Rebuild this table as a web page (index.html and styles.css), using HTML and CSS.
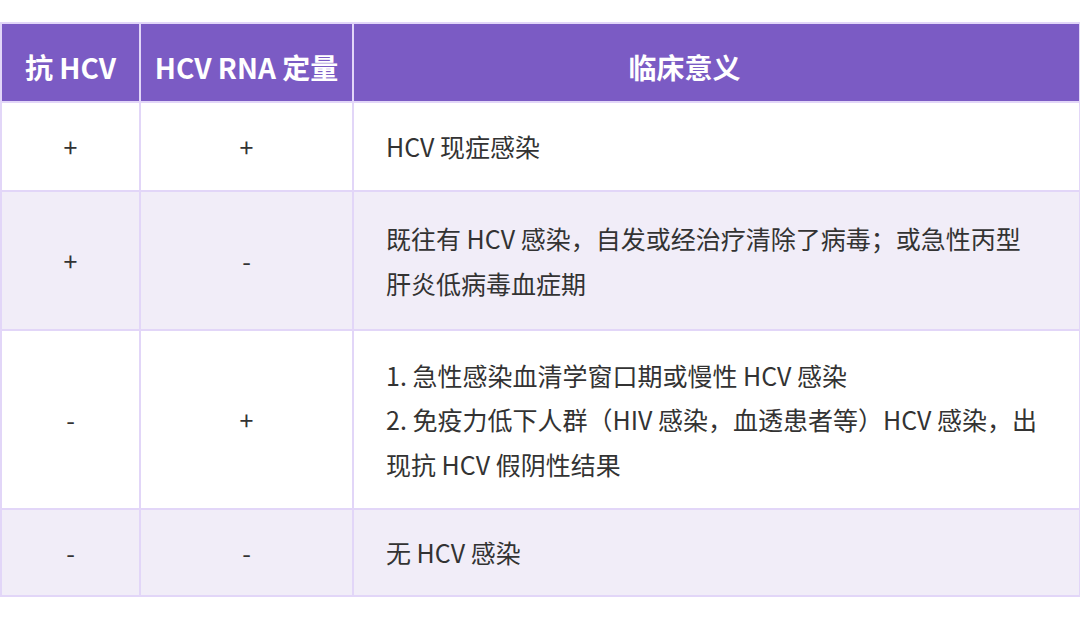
FILE: index.html
```html
<!DOCTYPE html>
<html lang="zh">
<head>
<meta charset="utf-8">
<link rel="stylesheet" href="styles.css">
</head>
<body>
<table class="tbl">
  <colgroup>
    <col class="c1">
    <col class="c2">
    <col class="c3">
  </colgroup>
  <thead>
    <tr class="head">
      <th>抗 HCV</th>
      <th>HCV RNA 定量</th>
      <th class="meaning">临床意义</th>
    </tr>
  </thead>
  <tbody>
    <tr class="r1">
      <td class="sign">+</td>
      <td class="sign">+</td>
      <td class="desc">HCV 现症感染</td>
    </tr>
    <tr class="r2 alt">
      <td class="sign">+</td>
      <td class="sign">-</td>
      <td class="desc">既往有 HCV 感染，自发或经治疗清除了病毒；或急性丙型<br>肝炎低病毒血症期</td>
    </tr>
    <tr class="r3">
      <td class="sign">-</td>
      <td class="sign">+</td>
      <td class="desc">1. 急性感染血清学窗口期或慢性 HCV 感染<br>2. 免疫力低下人群（HIV 感染，血透患者等）HCV 感染，出<br>现抗 HCV 假阴性结果</td>
    </tr>
    <tr class="r4 alt">
      <td class="sign">-</td>
      <td class="sign">-</td>
      <td class="desc">无 HCV 感染</td>
    </tr>
  </tbody>
</table>
</body>
</html>
```

FILE: styles.css
```css
html, body {
  margin: 0;
  padding: 0;
  background: #ffffff;
}
body {
  font-family: "Noto Sans CJK SC", "Noto Sans", sans-serif;
  color: #333333;
}
.tbl {
  margin-top: 22px;
  border-collapse: collapse;
  width: 1079px;
  table-layout: fixed;
}
.c1 { width: 139px; }
.c2 { width: 213px; }
.c3 { width: 727px; }
.tbl th, .tbl td {
  border: 2px solid #e2d6f8;
  padding: 0;
}
.head th {
  background: #7b5bc4;
  color: #ffffff;
  font-weight: 700;
  font-size: 28px;
  height: 69px;
  padding-top: 8px;
  text-align: center;
}
.head th.meaning {
  padding-right: 64px;
}
.tbl td {
  font-size: 25px;
  line-height: 44.5px;
}
.sign {
  text-align: center;
}
.desc {
  text-align: left;
  padding-left: 32px !important;
}
.alt td {
  background: #f1edf8;
}
.r1 td { height: 87px; }
.r2 td { height: 137px; }
.r3 td { height: 177px; }
.r4 td { height: 85px; }
```
